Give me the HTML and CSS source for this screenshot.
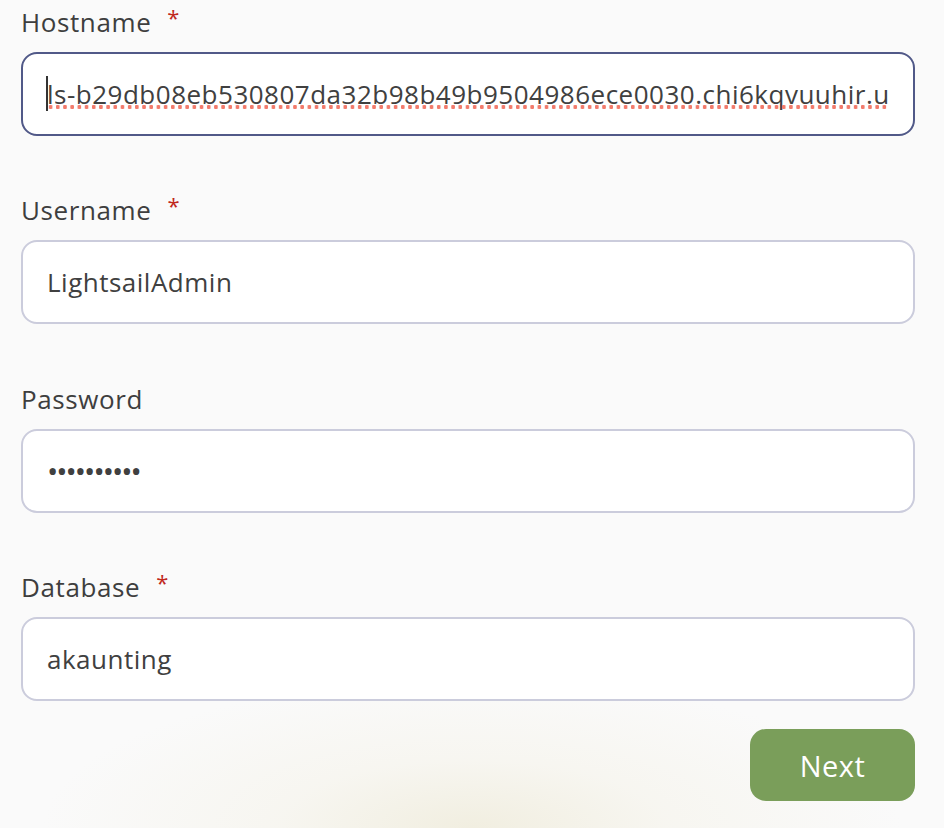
FILE: index.html
```html
<!DOCTYPE html>
<html lang="en">
<head>
<meta charset="utf-8">
<title>Database connection</title>
<link rel="stylesheet" href="styles.css">
</head>
<body>
<main class="form">
  <div class="field">
    <label class="label" for="host">Hostname<span class="req">*</span></label>
    <div class="control">
      <input id="host" class="input input-focus" type="text" value="ls-b29db08eb530807da32b98b49b9504986ece0030.chi6kqvuuhir.us-east-1.rds.amazonaws.com">
      <span class="spell"></span>
      <span class="caret"></span>
    </div>
  </div>
  <div class="field">
    <label class="label" for="user">Username<span class="req">*</span></label>
    <div class="control">
      <input id="user" class="input" type="text" value="LightsailAdmin">
    </div>
  </div>
  <div class="field">
    <label class="label" for="pass">Password</label>
    <div class="control">
      <input id="pass" class="input input-pass" type="password" value="0123456789">
    </div>
  </div>
  <div class="field field-last">
    <label class="label" for="db">Database<span class="req">*</span></label>
    <div class="control">
      <input id="db" class="input" type="text" value="akaunting">
    </div>
  </div>
  <div class="actions">
    <button class="btn" type="button">Next</button>
  </div>
</main>
</body>
</html>
```

FILE: styles.css
```css
html {
  height: 100%;
}
body {
  margin: 0;
  min-height: 100%;
  background-color: #fafafa;
  background-image: radial-gradient(ellipse 430px 150px at 50% 100%, #f1eee0 0%, rgba(245, 243, 234, 0.6) 45%, rgba(250, 250, 250, 0) 100%);
  background-repeat: no-repeat;
  font-family: "Open Sans", "Liberation Sans", sans-serif;
  color: #3e3e3e;
  overflow: hidden;
}
.form {
  width: 894px;
  margin-left: 21px;
  padding-top: 4px;
  display: flex;
  flex-direction: column;
}
.field {
  display: flex;
  flex-direction: column;
  gap: 12px;
  margin-bottom: 56.4px;
}
.field-last {
  margin-bottom: 28px;
}
.label {
  font-size: 26px;
  font-weight: 500;
  line-height: 36px;
  letter-spacing: 0.6px;
  color: #3e3e3e;
}
.req {
  color: #c0281c;
  font-size: 22px;
  font-weight: 400;
  line-height: 0;
  margin-left: 16px;
  vertical-align: 6px;
}
.control {
  position: relative;
}
.input {
  box-sizing: border-box;
  width: 100%;
  height: 84px;
  margin: 0;
  padding: 0 24px;
  border: 2px solid #cbccdc;
  border-radius: 16px;
  background: #ffffff;
  font-family: "Open Sans", "Liberation Sans", sans-serif;
  font-size: 26px;
  font-weight: 500;
  letter-spacing: 0.5px;
  color: #404040;
  outline: none;
}
.input-focus {
  border-color: #515988;
}
.input-pass {
  font-size: 30px;
  letter-spacing: -2px;
}
.spell {
  position: absolute;
  left: 26px;
  right: 26px;
  top: 53px;
  height: 4px;
  background-image: radial-gradient(circle, #f27b6c 1.9px, rgba(242, 123, 108, 0) 2.3px);
  background-size: 7.2px 4px;
  background-repeat: repeat-x;
}
.caret {
  position: absolute;
  left: 25px;
  top: 24px;
  width: 2px;
  height: 35px;
  background: #333333;
}
.actions {
  display: flex;
  justify-content: flex-end;
}
.btn {
  width: 165px;
  height: 72px;
  border: none;
  border-radius: 16px;
  background: #7a9e5a;
  color: #ffffff;
  font-family: "Open Sans", "Liberation Sans", sans-serif;
  font-size: 29px;
  letter-spacing: 0.5px;
  cursor: pointer;
}
```
